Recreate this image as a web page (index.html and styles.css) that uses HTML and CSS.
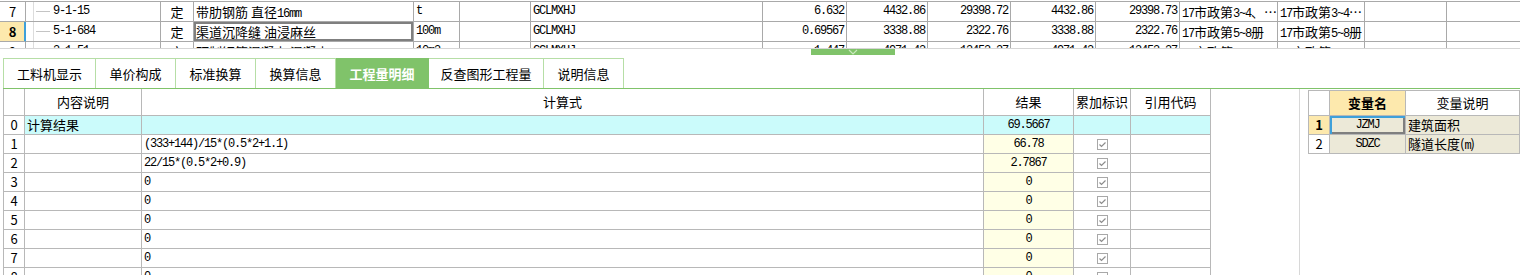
FILE: index.html
```html
<!DOCTYPE html>
<html lang="zh-CN">
<head>
  <meta charset="UTF-8" />
  <title>工程量明细</title>
  <link rel="stylesheet" href="styles.css">
</head>
<body>
  <!-- 上方定额列表 -->
  <div class="top">
    <div class="tgrid">
      <div class="trow">
        <div class="ctr">7</div>
        <div class="code"><span class="tree"></span><span class="m">9-1-15</span></div>
        <div class="ctr">定</div>
        <div>带肋钢筋 直径<span class="m">16mm</span></div>
        <div class="m">t</div>
        <div></div>
        <div class="m">GCLMXHJ</div>
        <div class="m num">6.632</div>
        <div class="m num">4432.86</div>
        <div class="m num">29398.72</div>
        <div class="m num">4432.86</div>
        <div class="m num">29398.73</div>
        <div><span class="m">17</span>市政第<span class="m">3~4</span>、…</div>
        <div><span class="m">17</span>市政第<span class="m">3~4</span>…</div>
        <div></div>
        <div></div>
      </div>
      <div class="trow">
        <div class="ctr cur"><b>8</b></div>
        <div class="code"><span class="tree"></span><span class="m">5-1-684</span></div>
        <div class="ctr">定</div>
        <div class="sel">渠道沉降缝 油浸麻丝</div>
        <div class="m">100m</div>
        <div></div>
        <div class="m">GCLMXHJ</div>
        <div class="m num">0.69567</div>
        <div class="m num">3338.88</div>
        <div class="m num">2322.76</div>
        <div class="m num">3338.88</div>
        <div class="m num">2322.76</div>
        <div><span class="m">17</span>市政第<span class="m">5~8</span>册</div>
        <div><span class="m">17</span>市政第<span class="m">5~8</span>册</div>
        <div></div>
        <div></div>
      </div>
      <div class="trow">
        <div class="ctr">9</div>
        <div class="code"><span class="tree"></span><span class="m">3-1-51</span></div>
        <div class="ctr">定</div>
        <div>预制钢筋混凝土 混凝土</div>
        <div class="m">10m3</div>
        <div></div>
        <div class="m">GCLMXHJ</div>
        <div class="m num">1.447</div>
        <div class="m num">4971.43</div>
        <div class="m num">13453.27</div>
        <div class="m num">4971.43</div>
        <div class="m num">13453.27</div>
        <div><span class="m">17</span>市政第<span class="m">3~4</span></div>
        <div><span class="m">17</span>市政第<span class="m">3~4</span></div>
        <div></div>
        <div></div>
      </div>
    </div>
  </div>

  <div class="split">
    <div class="grip">
      <svg width="10" height="6" viewBox="0 0 10 6"><polyline points="1,1 5,5 9,1" fill="none" stroke="#c9e8bd" stroke-width="1.2"/></svg>
    </div>
  </div>

  <div class="tabs">
    <div class="tab">工料机显示</div>
    <div class="tab">单价构成</div>
    <div class="tab">标准换算</div>
    <div class="tab">换算信息</div>
    <div class="tab active">工程量明细</div>
    <div class="tab">反查图形工程量</div>
    <div class="tab">说明信息</div>
  </div>

  <div class="lower">
    <div class="calc">
      <div class="lrow head">
        <div></div><div>内容说明</div><div>计算式</div><div>结果</div><div>累加标识</div><div>引用代码</div>
      </div>
      <div class="lrow total">
        <div class="rn">0</div><div>计算结果</div><div></div><div class="m res">69.5667</div><div></div><div></div>
      </div>
      <div class="lrow">
        <div class="rn">1</div><div></div><div class="m">(333+144)/15*(0.5*2+1.1)</div><div class="m res">66.78</div>
        <div class="chk"><svg width="11" height="11" viewBox="0 0 11 11"><rect x="0.5" y="0.5" width="10" height="10" fill="#fff" stroke="#a8a8a8"/><path d="M2.5 5.5 L4.5 7.5 L8.5 3.5" fill="none" stroke="#8c8c8c" stroke-width="1.2"/></svg></div><div></div>
      </div>
      <div class="lrow">
        <div class="rn">2</div><div></div><div class="m">22/15*(0.5*2+0.9)</div><div class="m res">2.7867</div>
        <div class="chk"><svg width="11" height="11" viewBox="0 0 11 11"><rect x="0.5" y="0.5" width="10" height="10" fill="#fff" stroke="#a8a8a8"/><path d="M2.5 5.5 L4.5 7.5 L8.5 3.5" fill="none" stroke="#8c8c8c" stroke-width="1.2"/></svg></div><div></div>
      </div>
      <div class="lrow">
        <div class="rn">3</div><div></div><div class="m">0</div><div class="m res">0</div>
        <div class="chk"><svg width="11" height="11" viewBox="0 0 11 11"><rect x="0.5" y="0.5" width="10" height="10" fill="#fff" stroke="#a8a8a8"/><path d="M2.5 5.5 L4.5 7.5 L8.5 3.5" fill="none" stroke="#8c8c8c" stroke-width="1.2"/></svg></div><div></div>
      </div>
      <div class="lrow">
        <div class="rn">4</div><div></div><div class="m">0</div><div class="m res">0</div>
        <div class="chk"><svg width="11" height="11" viewBox="0 0 11 11"><rect x="0.5" y="0.5" width="10" height="10" fill="#fff" stroke="#a8a8a8"/><path d="M2.5 5.5 L4.5 7.5 L8.5 3.5" fill="none" stroke="#8c8c8c" stroke-width="1.2"/></svg></div><div></div>
      </div>
      <div class="lrow">
        <div class="rn">5</div><div></div><div class="m">0</div><div class="m res">0</div>
        <div class="chk"><svg width="11" height="11" viewBox="0 0 11 11"><rect x="0.5" y="0.5" width="10" height="10" fill="#fff" stroke="#a8a8a8"/><path d="M2.5 5.5 L4.5 7.5 L8.5 3.5" fill="none" stroke="#8c8c8c" stroke-width="1.2"/></svg></div><div></div>
      </div>
      <div class="lrow">
        <div class="rn">6</div><div></div><div class="m">0</div><div class="m res">0</div>
        <div class="chk"><svg width="11" height="11" viewBox="0 0 11 11"><rect x="0.5" y="0.5" width="10" height="10" fill="#fff" stroke="#a8a8a8"/><path d="M2.5 5.5 L4.5 7.5 L8.5 3.5" fill="none" stroke="#8c8c8c" stroke-width="1.2"/></svg></div><div></div>
      </div>
      <div class="lrow">
        <div class="rn">7</div><div></div><div class="m">0</div><div class="m res">0</div>
        <div class="chk"><svg width="11" height="11" viewBox="0 0 11 11"><rect x="0.5" y="0.5" width="10" height="10" fill="#fff" stroke="#a8a8a8"/><path d="M2.5 5.5 L4.5 7.5 L8.5 3.5" fill="none" stroke="#8c8c8c" stroke-width="1.2"/></svg></div><div></div>
      </div>
      <div class="lrow">
        <div class="rn">8</div><div></div><div class="m">0</div><div class="m res">0</div>
        <div class="chk"><svg width="11" height="11" viewBox="0 0 11 11"><rect x="0.5" y="0.5" width="10" height="10" fill="#fff" stroke="#a8a8a8"/><path d="M2.5 5.5 L4.5 7.5 L8.5 3.5" fill="none" stroke="#8c8c8c" stroke-width="1.2"/></svg></div><div></div>
      </div>
    </div>

    <div class="side">
      <div class="vars">
        <div class="rrow head">
          <div></div><div class="key">变量名</div><div>变量说明</div>
        </div>
        <div class="rrow">
          <div class="rn cur"><b>1</b></div><div class="m vcode cell-sel">JZMJ</div><div class="vtxt">建筑面积</div>
        </div>
        <div class="rrow">
          <div class="rn">2</div><div class="m vcode">SDZC</div><div class="vtxt">隧道长度(<span class="m">m</span>)</div>
        </div>
      </div>
    </div>
  </div>
</body>
</html>
```

FILE: styles.css
```css
body { margin: 0; width: 1520px; height: 275px; overflow: hidden; background: #fff; color: #000; font: 13px/19px "Noto Sans CJK SC", sans-serif; }
.m { font-family: "Liberation Mono", monospace; font-size: 12px; letter-spacing: -1.2px; }

/* 上方列表 */
.top { height: 48px; overflow: hidden; border-bottom: 1px solid #d6d6d6; }
.tgrid { margin-top: 1px; border-top: 1px solid #a9a9a9; }
.trow { display: grid; grid-template-columns: 26px 135px 33px 220px 46px 71px 232px 84px 81px 83px 85px 84px 98px 87px 82px 80px; height: 20px; }
.trow > div { box-sizing: border-box; border-right: 1px solid #a9a9a9; border-bottom: 1px solid #a9a9a9; padding: 0 2px; white-space: nowrap; overflow: hidden; line-height: 19px; }
.trow > .ctr { text-align: center; padding: 0; }
.trow > .num { text-align: right; }
.trow > .code { display: flex; padding: 0; }
.tree { width: 16px; margin: 0 3px 0 7px; border-left: 1px solid #dcdcdc; background: linear-gradient(#c4c4c4, #c4c4c4) no-repeat 2px 50% / 14px 1px; }
.trow > .cur { background: #fde9ad; border-right-color: #3ea0da; box-shadow: inset -1px 0 #3ea0da; }
.trow > .sel { box-shadow: inset 0 0 0 2px #7f7f7f; }

/* 分隔条 */
.split { height: 9px; }
.grip { margin-left: 811px; width: 84px; height: 6px; background: #80c36a; display: flex; justify-content: center; }

/* 页签 */
.tabs { display: flex; margin-left: 3px; height: 30px; border-bottom: 1px solid #80c36a; }
.tab { box-sizing: border-box; width: 80px; border-top: 1px solid #b6dea6; border-right: 1px solid #b6dea6; text-align: center; line-height: 29px; font-size: 13px; }
.tab:first-child { width: 93px; border-left: 1px solid #b6dea6; }
.tab:nth-child(5) { width: 93px; }
.tab:nth-child(6) { width: 115px; }
.tab.active { background: #80c36a; color: #fff; font-weight: bold; border-color: #80c36a; }

/* 下方 */
.lower { display: flex; margin-left: 3px; }
.calc { width: 1208px; border-left: 1px solid #b8b8b8; flex: none; }
.lrow { display: grid; grid-template-columns: 21px 117px 842px 90px 57px 80px; height: 19px; }
.lrow > div { box-sizing: border-box; border-right: 1px solid #b8b8b8; border-bottom: 1px solid #b8b8b8; padding: 0 2px; white-space: nowrap; overflow: hidden; line-height: 18px; }
.lrow.head { height: 27px; }
.lrow.head > div { text-align: center; line-height: 26px; }
.lrow > .rn { text-align: center; padding: 0; }
.lrow > .res { text-align: center; background: #ffffe6; }
.lrow.total > div:not(.rn) { background: #cbfbfb; }
.lrow > .chk { display: flex; align-items: center; justify-content: center; }

.side { margin-left: 87px; border-left: 1px solid #d8d8d8; padding: 1px 0 0 8px; height: 190px; }
.vars { border-left: 1px solid #b8b8b8; border-top: 1px solid #b8b8b8; }
.rrow { display: grid; grid-template-columns: 21px 76px 114px; height: 19px; }
.rrow > div { box-sizing: border-box; border-right: 1px solid #b8b8b8; border-bottom: 1px solid #b8b8b8; padding: 0 2px; white-space: nowrap; overflow: hidden; line-height: 18px; }
.rrow.head { height: 25px; }
.rrow.head > div { text-align: center; line-height: 24px; }
.rrow.head > .key { background: #fde9ad; font-weight: bold; }
.rrow > .rn { text-align: center; padding: 0; }
.rrow > .cur { background: #fde9ad; }
.rrow > .vcode { text-align: center; background: #ece9d8; }
.rrow > .vtxt { background: #ece9d8; }
.rrow > .cell-sel { box-shadow: inset 2px 2px #3ea0da, inset -2px -2px #7f7f7f; }
```
